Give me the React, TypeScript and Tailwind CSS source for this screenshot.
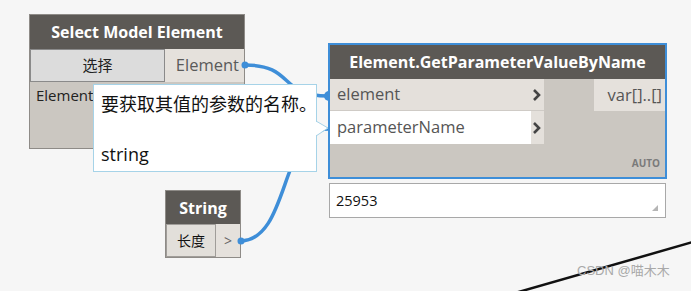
import React from "react";

const font = { fontFamily: '"Open Sans", "Noto Sans CJK SC", sans-serif' };

export default function App() {
  return (
    <div
      className="relative w-[691px] h-[291px] overflow-hidden bg-[#f6f6f6]"
      style={font}
    >
      {/* Select Model Element node */}
      <div className="absolute left-[29px] top-[14px] w-[216px] h-[135px] flex flex-col border border-[#8e8b87] bg-[#cbc7c1]">
        <div className="h-[34px] bg-[#5c5955] flex items-center justify-center text-white font-bold text-[16px] leading-none">
          Select Model Element
        </div>
        <div className="flex h-[33px]">
          <div className="w-[135px] bg-[#dcdcdc] border border-[#8a8a8a] flex items-center justify-center text-[15px] text-[#222]">
            选择
          </div>
          <div className="flex-1 bg-[#e5e1dc] flex items-center justify-end pr-[5px] text-[16.5px] text-[#5a5a5a]">
            Element
          </div>
        </div>
        <div className="flex-1 pl-[6px] pt-[6px] text-[15px] text-[#222] leading-none">
          Element
        </div>
      </div>

      {/* String node */}
      <div className="absolute left-[165px] top-[190px] w-[76px] h-[68px] flex flex-col border border-[#8e8b87] bg-[#cbc7c1]">
        <div className="h-[33px] bg-[#5c5955] flex items-center justify-center text-white font-bold text-[16px] leading-none">
          String
        </div>
        <div className="flex flex-1">
          <div className="w-[50px] bg-[#e2dfda] border border-[#a09d99] flex items-center justify-center text-[14px] text-[#111]">
            长度
          </div>
          <div className="flex-1 bg-[#e5e1dc] flex items-center justify-center text-[14px] text-[#666]">
            &gt;
          </div>
        </div>
      </div>

      {/* GetParameterValueByName node */}
      <div className="absolute left-[328px] top-[43px] w-[339px] h-[136px] flex flex-col border-2 border-[#3e8ed8] bg-[#cbc7c1]">
        <div className="h-[34px] bg-[#5c5955] flex items-center justify-center text-white font-bold text-[16px] leading-none">
          Element.GetParameterValueByName
        </div>
        <div className="flex flex-1">
          <div className="w-[214px] flex flex-col">
            <div className="h-[32px] bg-[#e4e0db] flex items-center justify-between pl-[7px] pr-[2px] border-b border-[#cfcbc6]">
              <span className="text-[16.5px] text-[#555]">element</span>
              <Chevron />
            </div>
            <div className="h-[33px] flex">
              <div className="w-[201px] bg-white flex items-center pl-[7px] text-[16.5px] text-[#555]">
                parameterName
              </div>
              <div className="flex-1 bg-[#e4e0db] flex items-center justify-end pr-[2px]">
                <Chevron />
              </div>
            </div>
          </div>
          <div className="flex-1 flex flex-col items-end">
            <div className="w-[71px] h-[32px] bg-[#e5e1dc] flex items-center justify-end pr-[3px] text-[16.5px] text-[#555]">
              var[]..[]
            </div>
            <div className="flex-1 w-full flex items-end justify-end pr-[5px] pb-[9px] text-[10px] font-bold text-[#7a7a7a] leading-none">
              AUTO
            </div>
          </div>
        </div>
      </div>

      {/* value preview */}
      <div className="absolute left-[329px] top-[183px] w-[337px] h-[35px] bg-white border border-[#a8a8a8] flex items-center pl-[6px] text-[14.5px] text-[#111]">
        25953
        <svg className="absolute right-[7px] bottom-[6px]" width="6" height="6" viewBox="0 0 6 6">
          <polygon points="6,0 6,6 0,6" fill="#b5b5b5" />
        </svg>
      </div>

      {/* wires */}
      <svg className="absolute inset-0 pointer-events-none" width="691" height="291" viewBox="0 0 691 291">
        <path d="M245 65 C 295 65, 278 96, 328 96" fill="none" stroke="#3e8ed8" strokeWidth="3.5" />
        <path d="M240 241 C 290 241, 280 129, 328 129" fill="none" stroke="#3e8ed8" strokeWidth="3.5" />
        <circle cx="245" cy="65" r="3.5" fill="#3e8ed8" />
        <circle cx="241" cy="241" r="3.5" fill="#3e8ed8" />
        <path d="M329 91 A 5 5 0 0 0 329 101 Z" fill="#3e8ed8" />
        <line x1="515" y1="293" x2="693" y2="242" stroke="#111" strokeWidth="2.5" />
      </svg>

      {/* tooltip */}
      <div className="absolute left-[93px] top-[84px] w-[224px] h-[88px] bg-white border border-[#a6d3e8] pl-[7px] pt-[7px] text-[18px] text-[#111] leading-[24px] whitespace-nowrap overflow-visible">
        <div>要获取其值的参数的名称。</div>
        <div className="mt-[26px]">string</div>
      </div>
      <svg className="absolute left-[315px] top-[119px]" width="16" height="20" viewBox="0 0 16 20">
        <polygon points="0,2 13,9 0,17" fill="white" />
        <polyline points="1,2 13,9 1,17" fill="none" stroke="#a6d3e8" strokeWidth="1" />
      </svg>

      {/* watermark */}
      <div className="absolute left-[577px] top-[264px] text-[13px] text-[#a9a9a9] leading-none" style={{ fontFamily: '"Liberation Sans", "Noto Sans CJK SC", sans-serif' }}>
        CSDN @喵木木
      </div>
    </div>
  );
}

function Chevron() {
  return (
    <svg width="10" height="14" viewBox="0 0 10 14">
      <polyline points="2,2 7,7 2,12" fill="none" stroke="#444" strokeWidth="2.6" />
    </svg>
  );
}
